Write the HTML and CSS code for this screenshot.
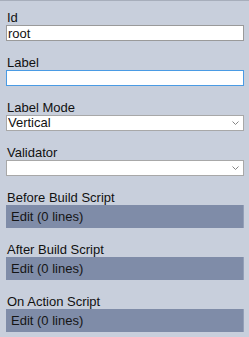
FILE: index.html
```html
<!DOCTYPE html>
<html lang="en">
<head>
    <meta charset="UTF-8" />
    <title>Properties</title>
    <link rel="stylesheet" href="styles.css">
</head>
<body>

<div class="props-panel">
    <div class="prop-group">
        <label for="id">Id</label>
        <input type="text" id="id" value="root" />
    </div>

    <div class="prop-group">
        <label for="label">Label</label>
        <input type="text" id="label" class="is-focused" />
    </div>

    <div class="prop-group">
        <label for="labelMode">Label Mode</label>
        <div class="select-wrap">
            <select id="labelMode">
                <option>Vertical</option>
                <option>Horizontal</option>
                <option>None</option>
            </select>
            <svg class="chevron" width="7" height="4" viewBox="0 0 7 4"><path d="M0.5 0.5 L3.5 3.5 L6.5 0.5" fill="none" stroke="#858585" stroke-width="1"/></svg>
        </div>
    </div>

    <div class="prop-group">
        <label for="validator">Validator</label>
        <div class="select-wrap">
            <select id="validator">
                <option></option>
            </select>
            <svg class="chevron" width="7" height="4" viewBox="0 0 7 4"><path d="M0.5 0.5 L3.5 3.5 L6.5 0.5" fill="none" stroke="#858585" stroke-width="1"/></svg>
        </div>
    </div>

    <div class="prop-group">
        <label>Before Build Script</label>
        <button class="script-btn">Edit (0 lines)</button>
    </div>

    <div class="prop-group">
        <label>After Build Script</label>
        <button class="script-btn">Edit (0 lines)</button>
    </div>

    <div class="prop-group">
        <label>On Action Script</label>
        <button class="script-btn">Edit (0 lines)</button>
    </div>
</div>

</body>
</html>
```

FILE: styles.css
```css
body {
    font-family: 'Liberation Sans', Arial, sans-serif;
    font-size: 13px;
    margin: 0;
    background: #c8cfdc;
    color: #111;
}

.props-panel {
    border-top: 1px solid #a7aebb;
    padding: 9px 5px 0 6px;
}

.prop-group {
    margin-bottom: 14px;
}

label {
    display: block;
    height: 15px;
    line-height: 15px;
    padding-left: 1px;
}

input[type="text"],
select {
    display: block;
    box-sizing: border-box;
    width: 100%;
    height: 16px;
    margin: 0;
    padding: 0 1px;
    font-family: inherit;
    font-size: 13px;
    line-height: 14px;
    color: #111;
    background: #fff;
    border: 1px solid #9a9a9a;
    border-radius: 0;
    outline: none;
}

input.is-focused {
    border-color: #4a9be4;
}

select {
    -webkit-appearance: none;
    appearance: none;
    border-color: #a8a8a8;
}

.select-wrap {
    position: relative;
}

.chevron {
    position: absolute;
    right: 5px;
    top: 6px;
}

.script-btn {
    display: block;
    box-sizing: border-box;
    width: 100%;
    height: 23px;
    margin: 0;
    padding: 0 5px;
    text-align: left;
    font-family: inherit;
    font-size: 13px;
    color: #151515;
    background: #7f8ca8;
    border: none;
    border-right: 1px solid #93a0b8;
    border-radius: 0;
    cursor: pointer;
}
```
